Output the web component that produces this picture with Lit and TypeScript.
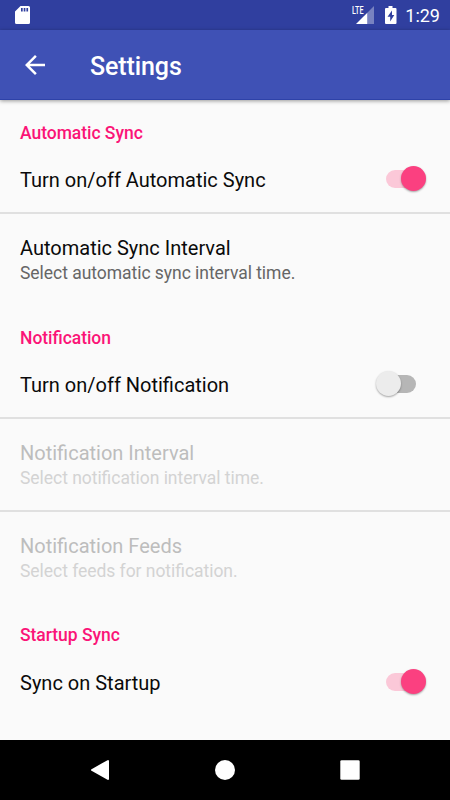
import { LitElement, html, css } from "lit";
import { customElement, property } from "lit/decorators.js";

@customElement("toggle-switch")
class ToggleSwitch extends LitElement {
  @property({ type: Boolean, reflect: true }) on = false;
  static styles = css`
    :host { display: block; width: 50px; height: 36px; }
    .wrap { position: relative; width: 50px; height: 36px; }
    .track { position: absolute; left: 10px; top: 9px; width: 30px; height: 17.5px; border-radius: 9px; background: #b6b6b6; }
    .thumb { position: absolute; left: 0; top: 5px; width: 25px; height: 25px; border-radius: 50%; background: #ececec; box-shadow: 0 1px 2px rgba(0,0,0,.35); }
    :host([on]) .track { background: #fbc8d8; }
    :host([on]) .thumb { left: 25px; background: #fb4080; }
  `;
  render() {
    return html`<div class="wrap"><div class="track"></div><div class="thumb"></div></div>`;
  }
}

interface Item { name: string; desc?: string; on?: boolean; off?: boolean; }
interface Section { title: string; items: Item[]; }

const sections: Section[] = [
  { title: "Automatic Sync", items: [
    { name: "Turn on/off Automatic Sync", on: true },
    { name: "Automatic Sync Interval", desc: "Select automatic sync interval time." },
  ] },
  { title: "Notification", items: [
    { name: "Turn on/off Notification", on: false },
    { name: "Notification Interval", desc: "Select notification interval time.", off: true },
    { name: "Notification Feeds", desc: "Select feeds for notification.", off: true },
  ] },
  { title: "Startup Sync", items: [{ name: "Sync on Startup", on: true }] },
];

@customElement("app-root")
class AppRoot extends LitElement {
  static styles = css`
    * { box-sizing: border-box; }
    :host { display: flex; flex-direction: column; width: 450px; height: 800px; background: #fafafa; font-family: Roboto, sans-serif; overflow: hidden; }
    svg { display: block; flex: none; }
    .status { height: 30px; flex: none; background: #303f9f; color: #fff; display: flex; align-items: center; padding: 0 10px 0 15px; }
    .spacer { flex: 1; }
    .lte { font: 500 11.5px/12px Roboto, sans-serif; fill: #fff; }
    .clock { font-size: 18px; line-height: 24px; margin: 2px 0 0 1px; }
    .bar { position: relative; height: 70px; flex: none; background: #3f51b5; display: flex; align-items: center; box-shadow: 0 1px 4px rgba(0,0,0,.4); border-bottom: 1px solid #2e42a8; color: #fff; padding-left: 20px; gap: 40px; }
    h1 { margin: 5px 0 0; font-size: 25px; font-weight: 500; line-height: 30px; letter-spacing: -0.1px; }
    main { flex: 1; min-height: 0; }
    h2 { margin: 0; height: 46px; padding: 20.5px 20px 0; font-size: 17.5px; line-height: 24px; font-weight: 500; color: #fb1477; letter-spacing: -0.04px; font-feature-settings: "liga" 1; }
    .row { display: flex; align-items: center; justify-content: space-between; padding: 0 24px 0 20px; height: 66.4px; }
    .row.two { height: 92.7px; padding-top: 1.5px; }
    .row + .row { border-top: 2px solid #e0e0e0; }
    .name { font-size: 20px; line-height: 26px; color: #0a0a0a; }
    .row:not(.two) .name { margin-top: 1.5px; }
    .desc { font-size: 17.5px; line-height: 25.5px; color: #666; letter-spacing: -0.04px; font-feature-settings: "liga" 1; }
    .off .name { color: #bdbdbd; }
    .off .desc { color: #d3d3d3; }
    .nav { height: 60px; background: #000; flex: none; display: flex; align-items: center; justify-content: space-between; padding: 0 87px; }
  `;

  row(i: Item) {
    return html`<div class="row ${i.desc ? "two" : ""} ${i.off ? "off" : ""}">
      <div><div class="name">${i.name}</div>${i.desc ? html`<div class="desc">${i.desc}</div>` : ""}</div>
      ${i.on === undefined ? "" : html`<toggle-switch ?on=${i.on}></toggle-switch>`}
    </div>`;
  }

  render() {
    return html`
      <div class="status">
        <svg width="15" height="20" viewBox="0 0 15 20" fill="#fff"><path fill-rule="evenodd" d="M5.5 1H13.5Q15 1 15 2.500V17.500Q15 19 13.500 19H1.500Q0 19 0 17.500V6.500ZM6 3V6.500H7.700V3ZM8.700 3V6.500H10.400V3ZM11.400 3V6.500H13.100V3Z"/></svg>
        <div class="spacer"></div>
        <svg width="52" height="30" viewBox="0 0 52 30" fill="#fff">
          <path d="M22 6V24H15.300V12.700Z" opacity=".35"/>
          <path d="M15.300 12.700V24H4Z"/>
          <text class="lte" x="0" y="14" textLength="11.500" lengthAdjust="spacingAndGlyphs">LTE</text>
          <path fill-rule="evenodd" d="M36.500 6H40.500V8H43.500Q44.500 8 44.500 9V23Q44.500 24 43.500 24H34Q33 24 33 23V9Q33 8 34 8H36.500ZM40 10.500L35.500 16.700H38.200V21.500L42.300 15H40Z"/>
        </svg>
        <div class="clock">1:29</div>
      </div>
      <div class="bar">
        <svg width="30" height="30" viewBox="0 0 24 24" fill="#fff"><path d="M20 11H7.830l5.590-5.590L12 4l-8 8 8 8 1.410-1.410L7.830 13H20v-2z"/></svg>
        <h1>Settings</h1>
      </div>
      <main>${sections.map((s) => html`<h2>${s.title}</h2>${s.items.map((i) => this.row(i))}`)}</main>
      <div class="nav">
        <svg width="26" height="26" viewBox="0 0 26 26"><path d="M21 4V22L5 13Z" fill="#fff" stroke="#fff" stroke-width="2" stroke-linejoin="round"/></svg>
        <svg width="26" height="26" viewBox="0 0 26 26"><circle cx="13" cy="13" r="10" fill="#fff"/></svg>
        <svg width="26" height="26" viewBox="0 0 26 26"><rect x="3.300" y="3.300" width="19.400" height="19.400" rx="1.300" fill="#fff"/></svg>
      </div>`;
  }
}
